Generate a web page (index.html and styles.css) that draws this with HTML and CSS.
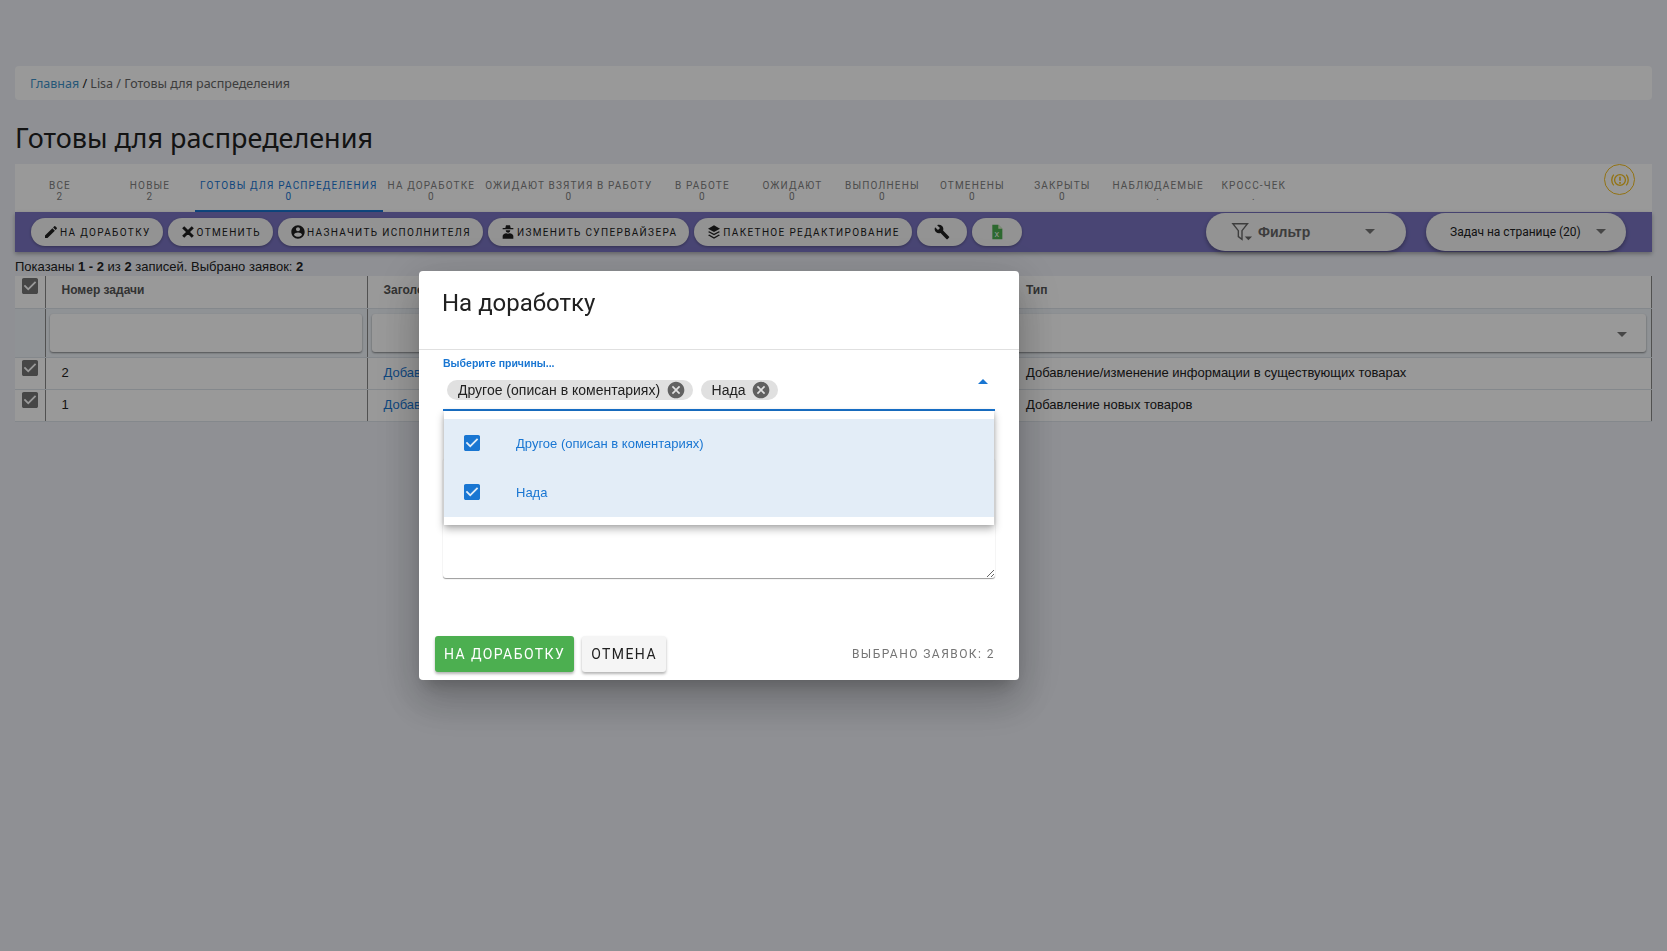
FILE: index.html
```html
<!DOCTYPE html>
<html lang="ru">
<head>
    <meta charset="UTF-8">
    <title>Готовы для распределения</title>
    <link rel="stylesheet" href="styles.css">
</head>
<body>
    <div class="breadcrumb"><a href="#">Главная</a> <span class="crumb-sep">/</span> Lisa / Готовы для распределения</div>
    <h1 class="page-title">Готовы для распределения</h1>

    <div class="tabs">
        <div class="tab"><span>Все</span><span class="count">2</span></div>
        <div class="tab"><span>Новые</span><span class="count">2</span></div>
        <div class="tab active"><span>Готовы для распределения</span><span class="count">0</span></div>
        <div class="tab"><span>На доработке</span><span class="count">0</span></div>
        <div class="tab"><span>Ожидают взятия в работу</span><span class="count">0</span></div>
        <div class="tab"><span>В работе</span><span class="count">0</span></div>
        <div class="tab"><span>Ожидают</span><span class="count">0</span></div>
        <div class="tab"><span>Выполнены</span><span class="count">0</span></div>
        <div class="tab"><span>Отменены</span><span class="count">0</span></div>
        <div class="tab"><span>Закрыты</span><span class="count">0</span></div>
        <div class="tab"><span>Наблюдаемые</span><span class="count">.</span></div>
        <div class="tab"><span>Кросс-чек</span><span class="count">.</span></div>
        <div class="alert-icon">
            <svg width="20" height="20" viewBox="0 0 24 24" fill="none" stroke="#f5c021" stroke-width="1.600">
                <circle cx="12" cy="12" r="6.500"/>
                <path stroke-width="2" d="M12 8v5M12 14.500v2"/>
                <path d="M4.500 5.500a10 10 0 0 0 0 13M19.500 5.500a10 10 0 0 1 0 13"/>
            </svg>
        </div>
    </div>

    <div class="toolbar">
        <button class="pill">
            <svg class="ico" viewBox="0 0 24 24"><path d="M3 17.250V21h3.750L17.810 9.940l-3.750-3.750L3 17.250zM20.710 7.040c.39-.39.39-1.020 0-1.410l-2.340-2.340c-.39-.39-1.020-.39-1.410 0l-1.830 1.830 3.750 3.750 1.830-1.830z"/></svg>
            На доработку
        </button>
        <button class="pill">
            <svg class="ico" viewBox="0 0 24 24"><path stroke="#212121" stroke-width="2.500" d="M19 6.410L17.590 5 12 10.590 6.410 5 5 6.410 10.590 12 5 17.590 6.410 19 12 13.410 17.590 19 19 17.590 13.410 12z"/></svg>
            Отменить
        </button>
        <button class="pill">
            <svg class="ico" viewBox="0 0 24 24"><path d="M12 2C6.480 2 2 6.480 2 12s4.480 10 10 10 10-4.480 10-10S17.520 2 12 2zm0 3c1.660 0 3 1.340 3 3s-1.340 3-3 3-3-1.340-3-3 1.340-3 3-3zm0 14.200c-2.500 0-4.710-1.280-6-3.220.03-1.990 4-3.080 6-3.080 1.990 0 5.970 1.090 6 3.080-1.290 1.940-3.500 3.220-6 3.220z"/></svg>
            Назначить исполнителя
        </button>
        <button class="pill">
            <svg class="ico" viewBox="0 0 24 24"><path d="M9 2h6l1 4h4v2H4V6h4l1-4zM8.500 9.500h7a3.500 3.500 0 0 1-7 0zM12 14.500l2.500-.5c3 .5 5.500 2 5.500 4v4H4v-4c0-2 2.500-3.500 5.500-4l2.500.5z"/></svg>
            Изменить супервайзера
        </button>
        <button class="pill">
            <svg class="ico" viewBox="0 0 24 24"><path d="M12 2l9 5-9 5-9-5 9-5zM4.800 10.700L12 14.700l7.200-4L21 12l-9 5-9-5 1.800-1.300zM4.800 15.700L12 19.700l7.200-4L21 17l-9 5-9-5 1.800-1.300z"/></svg>
            Пакетное редактирование
        </button>
        <button class="pill icon-only">
            <svg class="ico" viewBox="0 0 24 24"><path d="M22.700 19l-9.100-9.100c.9-2.300.4-5-1.500-6.900-2-2-5-2.400-7.400-1.300L9 6 6 9 1.600 4.700C.4 7.100.9 10.100 2.900 12.100c1.900 1.900 4.600 2.400 6.900 1.500l9.100 9.100c.4.4 1 .4 1.400 0l2.300-2.300c.5-.4.500-1.100.1-1.400z"/></svg>
        </button>
        <button class="pill icon-only">
            <svg class="ico" viewBox="0 0 24 24"><path fill="#4caf50" d="M5 1h9l6 6v16H5z"/><path fill="#dcedc8" d="M14 1l6 6h-6z"/><text x="12.500" y="19" font-size="11" font-family="Roboto" text-anchor="middle" fill="#fff">X</text></svg>
        </button>

        <div class="toolbar-right">
            <div class="select-pill filter-pill">
                <svg width="22" height="22" viewBox="0 0 24 24" fill="none" stroke="#666" stroke-width="1.500"><path d="M2 3h16l-6 7.500V20l-4-3v-6.500z"/><path fill="#666" stroke="none" d="M15 17h8l-4 4z"/></svg>
                <span class="filter-label">Фильтр</span>
                <span class="caret"></span>
            </div>
            <div class="select-pill size-pill">
                <span>Задач на странице (20)</span>
                <span class="caret"></span>
            </div>
        </div>
    </div>

    <div class="records">Показаны <b>1 - 2</b> из <b>2</b> записей. Выбрано заявок: <b>2</b></div>

    <table class="grid">
        <colgroup>
            <col class="col-check">
            <col class="col-number">
            <col class="col-title">
            <col>
        </colgroup>
        <thead>
            <tr>
                <th><svg class="box" viewBox="3 3 18 18"><path d="M19 3H5c-1.110 0-2 .9-2 2v14c0 1.100.89 2 2 2h14c1.110 0 2-.9 2-2V5c0-1.100-.89-2-2-2zm-9 14l-5-5 1.410-1.410L10 14.170l7.590-7.590L19 8l-9 9z"/></svg></th>
                <th>Номер задачи</th>
                <th>Заголовок</th>
                <th>Тип</th>
            </tr>
            <tr class="filter-row">
                <td></td>
                <td><div class="filter-input"></div></td>
                <td><div class="filter-input"></div></td>
                <td><div class="filter-input with-caret"><span class="caret"></span></div></td>
            </tr>
        </thead>
        <tbody>
            <tr>
                <td><svg class="box" viewBox="3 3 18 18"><path d="M19 3H5c-1.110 0-2 .9-2 2v14c0 1.100.89 2 2 2h14c1.110 0 2-.9 2-2V5c0-1.100-.89-2-2-2zm-9 14l-5-5 1.410-1.410L10 14.170l7.590-7.590L19 8l-9 9z"/></svg></td>
                <td>2</td>
                <td><a href="#">Добавление</a></td>
                <td>Добавление/изменение информации в существующих товарах</td>
            </tr>
            <tr>
                <td><svg class="box" viewBox="3 3 18 18"><path d="M19 3H5c-1.110 0-2 .9-2 2v14c0 1.100.89 2 2 2h14c1.110 0 2-.9 2-2V5c0-1.100-.89-2-2-2zm-9 14l-5-5 1.410-1.410L10 14.170l7.590-7.590L19 8l-9 9z"/></svg></td>
                <td>1</td>
                <td><a href="#">Добавление</a></td>
                <td>Добавление новых товаров</td>
            </tr>
        </tbody>
    </table>

    <div class="backdrop">
        <div class="modal">
            <div class="modal-head">На доработку</div>
            <div class="modal-body">
                <div class="reason-field">
                    <label class="reason-label">Выберите причины...</label>
                    <div class="chips">
                        <span class="chip">Другое (описан в коментариях)
                            <svg viewBox="0 0 24 24"><path d="M12 2C6.470 2 2 6.470 2 12s4.470 10 10 10 10-4.470 10-10S17.530 2 12 2zm5 13.590L15.590 17 12 13.410 8.410 17 7 15.590 10.590 12 7 8.410 8.410 7 12 10.590 15.590 7 17 8.410 13.410 12 17 15.590z"/></svg>
                        </span>
                        <span class="chip">Нада
                            <svg viewBox="0 0 24 24"><path d="M12 2C6.470 2 2 6.470 2 12s4.470 10 10 10 10-4.470 10-10S17.530 2 12 2zm5 13.590L15.590 17 12 13.410 8.410 17 7 15.590 10.590 12 7 8.410 8.410 7 12 10.590 15.590 7 17 8.410 13.410 12 17 15.590z"/></svg>
                        </span>
                    </div>
                    <span class="caret-up"></span>

                    <ul class="menu">
                        <li>
                            <svg viewBox="3 3 18 18"><path d="M19 3H5c-1.110 0-2 .9-2 2v14c0 1.100.89 2 2 2h14c1.110 0 2-.9 2-2V5c0-1.100-.89-2-2-2zm-9 14l-5-5 1.410-1.410L10 14.170l7.590-7.590L19 8l-9 9z"/></svg>
                            Другое (описан в коментариях)
                        </li>
                        <li>
                            <svg viewBox="3 3 18 18"><path d="M19 3H5c-1.110 0-2 .9-2 2v14c0 1.100.89 2 2 2h14c1.110 0 2-.9 2-2V5c0-1.100-.89-2-2-2zm-9 14l-5-5 1.410-1.410L10 14.170l7.590-7.590L19 8l-9 9z"/></svg>
                            Нада
                        </li>
                    </ul>
                </div>
                <textarea class="comment"></textarea>
            </div>
            <div class="modal-foot">
                <button class="btn btn-green">На доработку</button>
                <button class="btn btn-light">Отмена</button>
                <span class="selected-count">Выбрано заявок: 2</span>
            </div>
        </div>
    </div>
</body>
</html>
```

FILE: styles.css
```css
* {
    box-sizing: border-box;
}

body {
    margin: 0;
    padding: 66px 15px 0;
    min-height: 951px;
    background: #eef0f7;
    font-family: 'Liberation Sans', sans-serif;
    color: #212121;
    overflow: hidden;
}

a {
    color: #1976d2;
    text-decoration: none;
}

.breadcrumb {
    height: 34px;
    padding: 0 15px;
    background: #fff;
    border-radius: 4px;
    font-family: 'Noto Sans', sans-serif;
    font-size: 12.500px;
    line-height: 36px;
    color: #666;
}

.breadcrumb a {
    color: #3f92c9;
}

.crumb-sep {
    color: #212121;
}

.page-title {
    margin: 17px 0 0;
    height: 47px;
    font-family: 'Noto Sans', sans-serif;
    font-size: 27px;
    line-height: 42px;
    font-weight: 400;
}

.tabs {
    display: flex;
    height: 48px;
    background: #fff;
    position: relative;
}

.tab {
    min-width: 90px;
    padding: 16px 5px 0;
    display: flex;
    flex-direction: column;
    align-items: center;
    font-family: Roboto, sans-serif;
    font-size: 10px;
    line-height: 12px;
    letter-spacing: 1.150px;
    text-transform: uppercase;
    color: #808080;
}

.tab .count {
    margin-top: -1px;
}

.tab.active {
    color: #1976d2;
    border-bottom: 2px solid #1976d2;
}

.alert-icon {
    position: absolute;
    top: 0;
    right: 17px;
    width: 31px;
    height: 31px;
    border: 1px solid #f5c021;
    border-radius: 50%;
    display: flex;
    align-items: center;
    justify-content: center;
}

.toolbar {
    height: 40px;
    padding: 6px 16px;
    display: flex;
    align-items: flex-start;
    gap: 5px;
    background: #7a74c2;
    box-shadow: 0 2px 4px rgba(0, 0, 0, 0.3);
    position: relative;
}

.pill {
    height: 28px;
    padding: 0 12px;
    display: flex;
    align-items: center;
    gap: 1px;
    border: none;
    border-radius: 14px;
    background: #f5f5f5;
    box-shadow: 0 1px 3px rgba(0, 0, 0, 0.3);
    font-family: Roboto, sans-serif;
    font-size: 10px;
    letter-spacing: 1.350px;
    text-transform: uppercase;
    color: #212121;
}

.pill.icon-only {
    width: 50px;
    justify-content: center;
    padding: 0;
}

.ico {
    width: 16px;
    height: 16px;
    fill: #212121;
}

.toolbar-right {
    margin-left: auto;
    margin-right: 10px;
    margin-top: -5px;
    display: flex;
    gap: 20px;
}

.select-pill {
    width: 200px;
    height: 38px;
    border-radius: 19px;
    background: #f5f5f5;
    box-shadow: 0 2px 4px rgba(0, 0, 0, 0.35);
    display: flex;
    align-items: center;
    position: relative;
}

.filter-pill {
    padding-left: 25px;
    gap: 5px;
    color: #666;
}

.filter-label {
    font-weight: bold;
    font-size: 14px;
}

.size-pill {
    padding-left: 24px;
    font-family: Roboto, sans-serif;
    font-size: 12px;
    color: #212121;
}

.caret {
    width: 0;
    height: 0;
    border-left: 5px solid transparent;
    border-right: 5px solid transparent;
    border-top: 5px solid #757575;
    position: absolute;
    right: 31px;
    top: 16px;
}

.size-pill .caret {
    right: 20px;
}

.records {
    height: 24px;
    padding-top: 7px;
    font-size: 13px;
    line-height: 15px;
}

.grid {
    width: 100%;
    border-collapse: collapse;
    table-layout: fixed;
    background: #fff;
    font-size: 13px;
}

.col-check {
    width: 30px;
}

.col-number {
    width: 322px;
}

.col-title {
    width: 643px;
}

.grid th,
.grid td {
    height: 32px;
    padding: 0 16px 1px;
    text-align: left;
    white-space: nowrap;
    overflow: hidden;
    border-bottom: 1px solid #dde3ea;
    border-right: 1px solid #888;
}

.grid th {
    font-size: 12px;
    padding-bottom: 4px;
    color: #555;
}

.grid th:first-child,
.grid td:first-child {
    padding: 0 0 10px 7px;
}

.grid th:first-child {
    padding-bottom: 12px;
}

.grid th:nth-child(3),
.grid td:nth-child(3) {
    border-right: none;
}

.box {
    display: block;
    width: 16px;
    height: 16px;
    fill: #757575;
}

.grid .filter-row td {
    height: 49px;
    padding: 0 5px 0 4px;
    background: #eff4f9;
}

.filter-input {
    height: 38px;
    border-radius: 3px;
    background: #fff;
    box-shadow: 0 1px 2px rgba(0, 0, 0, 0.45);
    position: relative;
}

.filter-input .caret {
    top: 18px;
    right: 19px;
}

.backdrop {
    position: fixed;
    inset: 0;
    background: rgba(0, 0, 0, 0.4);
    padding: 271px 0 0 419px;
}

.modal {
    width: 600px;
    height: 409px;
    background: #fff;
    border-radius: 4px;
    box-shadow: 0 11px 15px -7px rgba(0, 0, 0, 0.2), 0 24px 38px 3px rgba(0, 0, 0, 0.14), 0 9px 46px 8px rgba(0, 0, 0, 0.12);
    display: flex;
    flex-direction: column;
}

.modal-head {
    height: 79px;
    padding: 18px 23px 0;
    border-bottom: 1px solid #e0e0e0;
    font-family: Roboto, sans-serif;
    font-size: 24px;
    line-height: 28px;
}

.modal-body {
    height: 236px;
    padding: 0 24px;
}

.reason-field {
    height: 61px;
    padding-top: 7px;
    border-bottom: 2px solid #1976d2;
    position: relative;
}

.reason-label {
    display: block;
    font-size: 10.500px;
    line-height: 12px;
    font-weight: bold;
    color: #1976d2;
}

.chips {
    margin-top: 11px;
    padding-left: 4px;
    display: flex;
    gap: 8px;
}

.chip {
    height: 20px;
    padding: 0 6.500px 0 11px;
    display: flex;
    align-items: center;
    gap: 6px;
    border-radius: 10px;
    background: #e0e0e0;
    font-size: 14px;
}

.chip svg {
    width: 20px;
    height: 20px;
    fill: #616161;
}

.caret-up {
    position: absolute;
    top: 29px;
    right: 7px;
    width: 0;
    height: 0;
    border-left: 5px solid transparent;
    border-right: 5px solid transparent;
    border-bottom: 5px solid #1976d2;
}

.menu {
    position: absolute;
    top: 61px;
    left: 1px;
    right: 1px;
    height: 114px;
    margin: 0;
    padding: 8px 0;
    list-style: none;
    background: #fff;
    box-shadow: 0 4px 8px rgba(0, 0, 0, 0.3), 0 0 4px rgba(0, 0, 0, 0.15);
    z-index: 2;
}

.menu li {
    height: 49px;
    padding-left: 20px;
    display: flex;
    align-items: center;
    gap: 36px;
    background: #e3edf7;
    font-size: 13px;
    color: #1976d2;
}

.menu svg {
    width: 16px;
    height: 16px;
    margin-bottom: 2px;
    fill: #1976d2;
}

.comment {
    display: block;
    width: 552px;
    height: 120px;
    margin-top: 47px;
    border: none;
    outline: none;
    border-radius: 3px;
    background: #fff;
    box-shadow: 0 1px 1px rgba(0, 0, 0, 0.4);
}

.modal-foot {
    flex: 1;
    padding: 0 24px 8px 16px;
    display: flex;
    align-items: flex-end;
    gap: 8px;
}

.btn {
    height: 36px;
    padding: 0 9px;
    border: none;
    border-radius: 3px;
    box-shadow: 0 2px 3px rgba(0, 0, 0, 0.3);
    font-family: Roboto, sans-serif;
    font-size: 14px;
    letter-spacing: 1.420px;
    text-transform: uppercase;
}

.btn-green {
    background: #4caf50;
    color: #fff;
}

.btn-light {
    background: #f5f5f5;
    color: #212121;
}

.selected-count {
    margin-left: auto;
    align-self: flex-end;
    line-height: 36px;
    font-family: Roboto, sans-serif;
    font-size: 12px;
    letter-spacing: 1.450px;
    text-transform: uppercase;
    color: #757575;
}
```
